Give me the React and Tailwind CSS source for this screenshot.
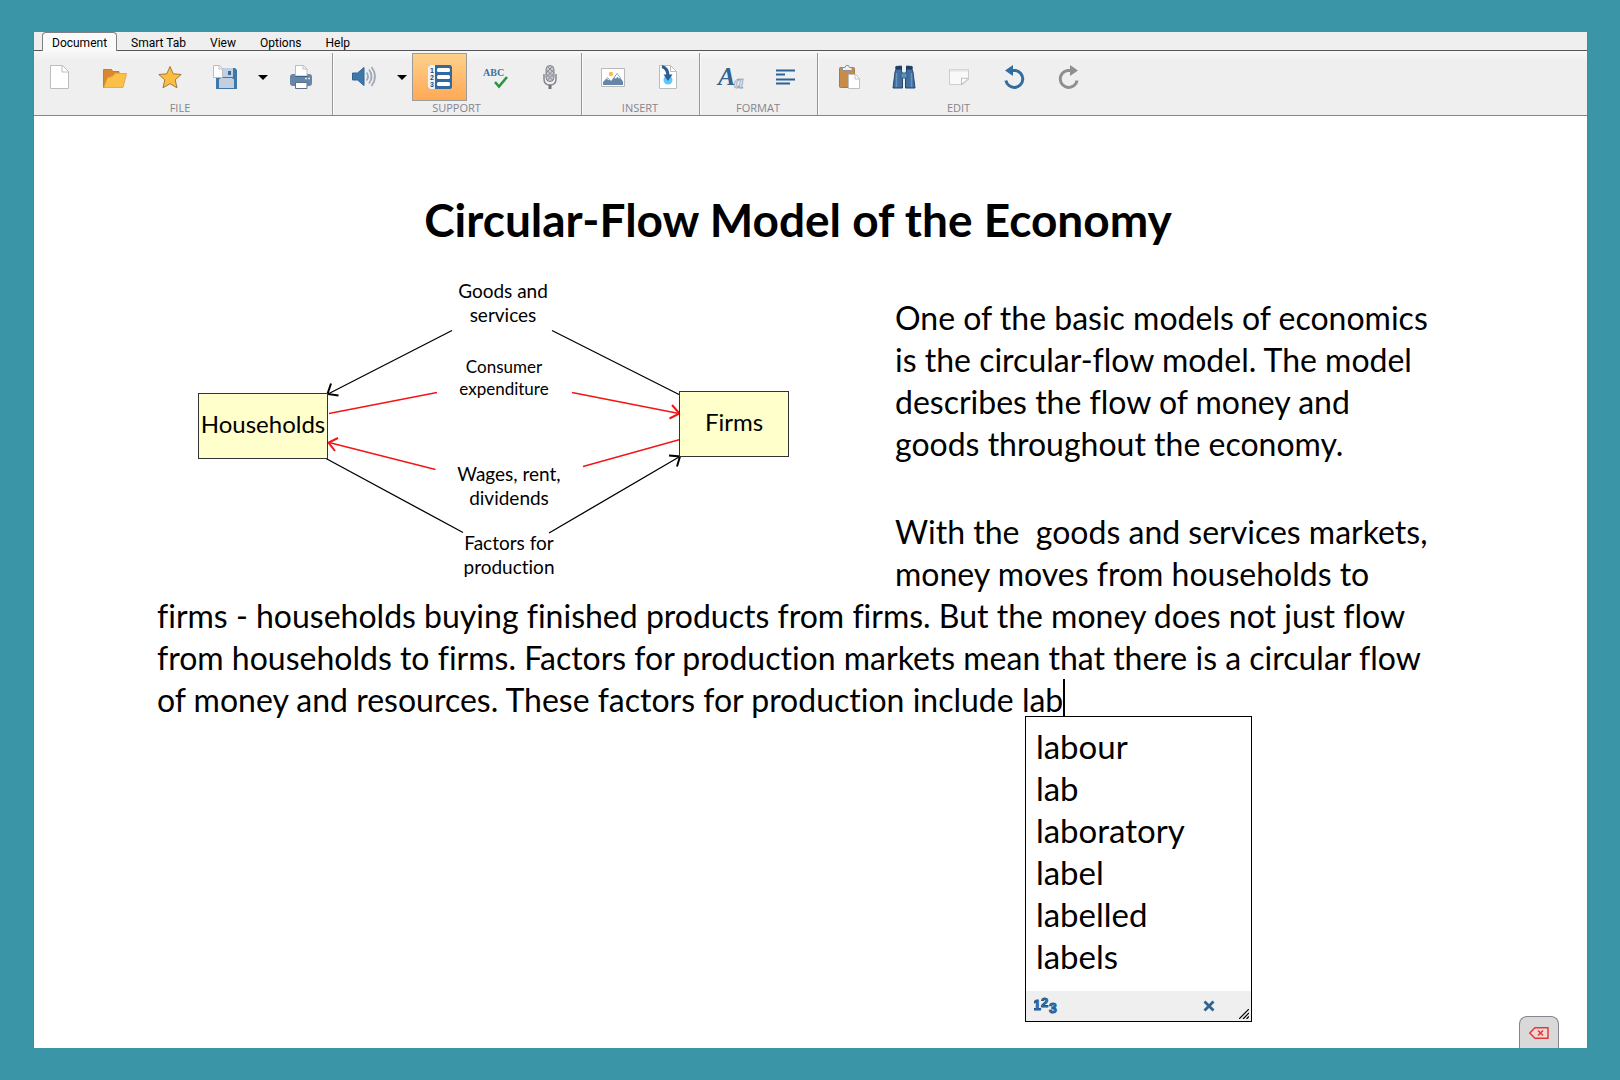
import { useState } from 'react'

const TABS = ['Document', 'Smart Tab', 'View', 'Options', 'Help']
const WORDS = ['labour', 'lab', 'laboratory', 'label', 'labelled', 'labels']

export default function App() {
  const [activeTab, setActiveTab] = useState('Document')

  return (
    <div className="flex min-h-screen bg-[#3a95a7] py-8 pr-8 pl-[33px] font-['Open_Sans',sans-serif] text-black">
      <div className="relative flex flex-1 flex-col border-x border-[#77777b] bg-white">
        <TabStrip active={activeTab} onChange={setActiveTab} />
        <Toolbar />
        <DocumentPage />
        <button
          aria-label="Backspace"
          className="absolute right-7 bottom-0 flex h-8 w-10 items-center justify-center rounded-t-lg border border-b-0 border-[#85858f] bg-[#d9d9d9]"
        >
          <BackspaceIcon />
        </button>
      </div>
    </div>
  )
}

function TabStrip({ active, onChange }) {
  return (
    <nav className="flex h-[19px] border-b border-[#55555a] bg-[#efefef] pl-2 font-[Roboto,sans-serif] text-xs leading-4">
      {TABS.map(tab => (
        <button
          key={tab}
          onClick={() => onChange(tab)}
          className={
            tab === active
              ? 'mr-0.5 h-[19px] rounded-t border border-b-0 border-[#808085] bg-[#fafafa] px-[9px] pt-px'
              : 'px-3 pt-[3px]'
          }
        >
          {tab}
        </button>
      ))}
    </nav>
  )
}

function Toolbar() {
  return (
    <div className="flex h-[65px] border-b border-[#85858f] bg-linear-to-b from-[#f8f8f8] from-0% to-[#efefef] to-15% pt-0.5">
      <ToolGroup label="FILE" className="-ml-0.5 pr-1">
        <Tool label="New"><NewIcon /></Tool>
        <Tool label="Open"><FolderIcon /></Tool>
        <Tool label="Favourites"><StarIcon /></Tool>
        <Tool label="Save"><SaveIcon /></Tool>
        <DropArrow label="Save options" />
        <Tool label="Print"><PrinterIcon /></Tool>
      </ToolGroup>
      <ToolGroup label="SUPPORT" className="pr-1 pl-0.5">
        <Tool label="Speech"><SpeakerIcon /></Tool>
        <DropArrow label="Speech options" />
        <Tool label="Prediction" selected><PredictionIcon /></Tool>
        <Tool label="Spell check"><SpellIcon /></Tool>
        <Tool label="Record"><MicIcon /></Tool>
      </ToolGroup>
      <ToolGroup label="INSERT" className="pr-1 pl-0.5">
        <Tool label="Insert picture"><PictureIcon /></Tool>
        <Tool label="Insert file"><InsertIcon /></Tool>
      </ToolGroup>
      <ToolGroup label="FORMAT" className="pr-1 pl-0.5">
        <Tool label="Font"><FontIcon /></Tool>
        <Tool label="Paragraph"><ParagraphIcon /></Tool>
      </ToolGroup>
      <ToolGroup label="EDIT" className="pr-1 pl-0.5" last>
        <Tool label="Paste"><PasteIcon /></Tool>
        <Tool label="Find"><BinocularsIcon /></Tool>
        <Tool label="Note"><NoteIcon /></Tool>
        <Tool label="Undo"><UndoIcon /></Tool>
        <Tool label="Redo"><RedoIcon /></Tool>
      </ToolGroup>
    </div>
  )
}

function ToolGroup({ label, className = '', last = false, children }) {
  return (
    <>
      <section className={`flex flex-col ${className}`}>
        <div className="flex h-12">{children}</div>
        <div className="text-center text-[11px] leading-[14px] text-[#85858c]">{label}</div>
      </section>
      {!last && <div className="w-0.5 border-r border-l border-l-[#99999d] border-r-[#fafafa]" />}
    </>
  )
}

function Tool({ label, selected = false, children }) {
  return (
    <button
      aria-label={label}
      aria-pressed={selected}
      className={`flex h-12 w-[55px] items-center justify-center ${
        selected ? 'border border-[#9c9c9c] bg-linear-to-b from-[#fed08a] to-[#ffa955]' : ''
      }`}
    >
      {children}
    </button>
  )
}

function DropArrow({ label }) {
  return (
    <button aria-label={label} className="flex h-12 w-[21px] items-center justify-center">
      <svg width="10" height="5" viewBox="0 0 10 5"><path d="M0 0h10L5 5z" /></svg>
    </button>
  )
}

function DocumentPage() {
  return (
    <main className="flex-1 pt-[74px] pr-[148px] pl-[123px] font-[Lato,sans-serif] [font-variant-ligatures:none]">
      <h1 className="text-center text-[46px] leading-[60px] font-bold">
        Circular-Flow Model of the Economy
      </h1>
      <div className="mt-7 flow-root text-[32px] leading-[42px] whitespace-pre">
        <FlowDiagram />
        <p className="mt-[19px]">
          One of the basic models of economics<br />
          is the circular-flow model. The model<br />
          describes the flow of money and<br />
          goods throughout the economy.
        </p>
        <p className="mt-[46px]">
          {'With the  goods and services markets,'}<br />
          money moves from households to<br />
          firms - households buying finished products from firms. But the money does not just flow<br />
          from households to firms. Factors for production markets mean that there is a circular flow<br />
          of money and resources. These factors for production include{' '}
          <span className="relative inline-block h-[42px] border-r-2 border-black align-top">
            lab
            <WordList />
          </span>
        </p>
      </div>
    </main>
  )
}

function WordList() {
  return (
    <div className="absolute top-[37px] left-[3px] w-[227px] border border-black bg-white">
      <ul className="pt-2 pb-[14px] text-[33px]">
        {WORDS.map(word => (
          <li key={word}>
            <button className="block w-full px-2.5 text-left">{word}</button>
          </li>
        ))}
      </ul>
      <div className="flex h-[30px] items-center justify-between bg-[#efefef] pr-0.5 pl-2">
        <button aria-label="Number words" className="pb-0.5"><NumbersIcon /></button>
        <div className="flex h-full items-center gap-6">
          <button aria-label="Close"><CloseIcon /></button>
          <div className="self-end pb-0.5"><ResizeGrip /></div>
        </div>
      </div>
    </div>
  )
}

// Drawing area is 738x300, coordinates below are relative to it
function FlowDiagram() {
  return (
    <figure className="relative float-left h-[300px] w-[738px] text-[19px] leading-6">
      <svg className="absolute inset-0" width="738" height="300" viewBox="0 0 738 300" fill="none" strokeWidth="1.3">
        <g stroke="#000">
          <path d="M295 52.500L171 116M395 52.500L523 117M169 180.500L306 254.500M392 255L522 179" />
          <path d="M174 105.500L170.500 116l11 1.500M512 177.500l11 1-3 10" strokeWidth="2" />
        </g>
        <g stroke="#f41414">
          <path d="M172 135.500L280 114.500M415 114.500L522 135.500M426 188.500L523 161.500M278.500 191.500L172 164.500" />
          <path d="M515 127l7.500 8.500-10 5M181 160l-9.500 4.500 6.500 8.500" strokeWidth="2" />
        </g>
      </svg>
      <div className="absolute top-[115px] left-[41px] flex h-[66px] w-[130px] items-center justify-center border border-[#333] bg-[#ffffcc] pb-1 text-2xl leading-7">
        Households
      </div>
      <div className="absolute top-[113px] left-[522px] flex h-[66px] w-[110px] items-center justify-center border border-[#333] bg-[#ffffcc] pb-1 text-2xl leading-7">
        Firms
      </div>
      <div className="absolute top-[1px] left-[276px] w-[140px] text-center">Goods and<br />services</div>
      <div className="absolute top-[78px] left-[277px] w-[140px] text-center text-[17px] leading-[22px]">Consumer<br />expenditure</div>
      <div className="absolute top-[184px] left-[282px] w-[140px] text-center">Wages, rent,<br />dividends</div>
      <div className="absolute top-[253px] left-[282px] w-[140px] text-center">Factors for<br />production</div>
    </figure>
  )
}

function Icon({ children }) {
  return <svg className="overflow-visible" width="24" height="24" viewBox="0 0 24 24" fill="none">{children}</svg>
}

function NewIcon() {
  return (
    <Icon>
      <path d="M2.500.5h12l6 6v17h-18z" fill="#fff" stroke="#bdbdbd" />
      <path d="M14 .5v6.500h6.500" stroke="#bdbdbd" />
    </Icon>
  )
}

function FolderIcon() {
  return (
    <Icon>
      <path d="M.5 4.500h8l1.500 2h6v16H.5z" fill="#d9882f" stroke="#c97c29" />
      <path d="M1 22.500L4.500 13l5-1.500L12 8.500h11.500L20 22.500z" fill="#fbc04a" stroke="#eda93a" />
    </Icon>
  )
}

function StarIcon() {
  return (
    <Icon>
      <path d="M12 1.500l3.200 7.300 8 .7-6 5.300 1.800 8L12 18.700l-7 4.100 1.800-8-6-5.300 8-.7z" fill="#fbbd42" stroke="#a07c39" strokeLinejoin="round" />
    </Icon>
  )
}

function SaveIcon() {
  return (
    <Icon>
      <path d="M3 3h19l2 2v19H3z" fill="#3f77a8" />
      <path d="M10 3h10v9H10z" fill="#c3cfe0" />
      <path d="M15 6h3v4h-3z" fill="#336b9e" />
      <path d="M6 14.500l2-1.500h11l2 1.500V23H6z" fill="#c3cfe0" />
      <path d="M.5.5h6l3 3v9h-9z" fill="#fff" stroke="#bdbdbd" />
      <path d="M6 .5v3.500h3.500" stroke="#bdbdbd" />
    </Icon>
  )
}

function PrinterIcon() {
  return (
    <Icon>
      <rect x="1" y="9" width="22" height="12" rx="3" fill="#6586a8" />
      <path d="M6.500 11V.5h8l3.500 3.500v7z" fill="#fff" stroke="#bdbdbd" />
      <path d="M14 .5V4h4" stroke="#bdbdbd" />
      <path d="M6 11.500h12.500" stroke="#3f5f82" />
      <path d="M16 13.500h2m1 0h2" stroke="#dde7f2" strokeWidth="1.500" />
      <path d="M6.500 17.500h11.500v6H6.500z" fill="#fff" stroke="#5c6f84" />
    </Icon>
  )
}

function SpeakerIcon() {
  return (
    <Icon>
      <path d="M.5 8h5L12 2.500v18L5.500 15h-5z" fill="#3f77a8" stroke="#2e6594" />
      <path d="M14.500 7.500q3 4 0 8M17 4.500q5 7 0 14M19.500 2q7 9.500 0 19" stroke="#a3abb9" strokeWidth="1.800" />
    </Icon>
  )
}

function PredictionIcon() {
  return (
    <Icon>
      <rect x="0" y="0" width="24" height="24" rx="2.500" fill="#326a9f" />
      <path d="M2.500 0H7v24H2.500A2.500 2.500 0 0 1 0 21.500v-19A2.500 2.500 0 0 1 2.500 0z" fill="#eef3f8" />
      <g fill="#fff">
        <rect x="9" y="3" width="13" height="4" rx="1.500" />
        <rect x="9" y="10" width="13" height="4" rx="1.500" />
        <rect x="9" y="17" width="13" height="4" rx="1.500" />
      </g>
      <g fill="#1d4d7b" fontSize="7" fontWeight="700" fontFamily="Liberation Sans">
        <text x="2" y="7.500">1</text>
        <text x="2" y="14.500">2</text>
        <text x="2" y="22">3</text>
      </g>
    </Icon>
  )
}

function SpellIcon() {
  return (
    <Icon>
      <text x="0" y="11" fill="#3e70a0" fontSize="10" fontWeight="700" fontFamily="Liberation Serif">ABC</text>
      <path d="M12 17l4 4.500L24 12" stroke="#2b9440" strokeWidth="2.600" />
    </Icon>
  )
}

function MicIcon() {
  return (
    <Icon>
      <rect x="8" y=".5" width="8" height="16" rx="4" fill="#c4c7cc" stroke="#7d8086" />
      <path d="M8.500 5l7 7M8.500 9l6 6M10 2l6 6M15.500 5l-7 7M15.500 9l-6 6M14 2L8 8" stroke="#85888e" strokeWidth=".9" />
      <path d="M6 9v5q0 6 6 6t6-6V9" stroke="#85888e" strokeWidth="1.500" />
      <path d="M12 20v4" stroke="#6f7277" strokeWidth="3" />
    </Icon>
  )
}

function PictureIcon() {
  return (
    <Icon>
      <path d="M.5 3.500h23v18H.5z" fill="#fff" stroke="#b9b9b9" />
      <circle cx="10" cy="9" r="2.200" fill="#fbbd42" />
      <path d="M2 20v-3l4.500-4.500L10 16l6-7.500 6 8V20z" fill="#6586a8" />
      <path d="M4 15.500l2.500-3 2 2-1 .8-1-1zM13 13l3-4.500 3.500 4.500-1.500 1-1.500-2L15 14z" fill="#fff" stroke="#6586a8" strokeWidth=".6" />
    </Icon>
  )
}

function InsertIcon() {
  return (
    <Icon>
      <path d="M3.500.5h11l6 6v17h-17z" fill="#fff" stroke="#bdbdbd" />
      <path d="M14.500.5v6h6" stroke="#bdbdbd" />
      <circle cx="12" cy="15" r="4.500" fill="#5cc9ff" />
      <path d="M6 1.500q6 1.500 6 10" stroke="#2c5f8f" strokeWidth="3.200" />
      <path d="M7.500 9.500h9L12 16z" fill="#2c5f8f" />
    </Icon>
  )
}

function FontIcon() {
  return (
    <Icon>
      <text x="-1" y="20" fill="#2f6391" fontSize="26" fontWeight="700" fontStyle="italic" fontFamily="Liberation Serif">A</text>
      <text x="15" y="23" fill="#dfe3ea" stroke="#98a4b5" strokeWidth=".8" fontSize="19" fontWeight="700" fontStyle="italic" fontFamily="Liberation Serif">a</text>
    </Icon>
  )
}

function ParagraphIcon() {
  return (
    <Icon>
      <path d="M2 5.500h19M2 9.500h9M2 14.500h19M2 18.500h14" stroke="#2b6398" strokeWidth="2" />
    </Icon>
  )
}

function PasteIcon() {
  return (
    <Icon>
      <rect x="2.500" y="2.500" width="15" height="20" rx="1" fill="#c88c49" stroke="#ad783c" />
      <path d="M5.500 5.500v-3h2.500L9 .5h2.500l1 2h2.500v3z" fill="#eef0f3" stroke="#8b929b" />
      <path d="M11.500 9.500h7l4 4v10h-11z" fill="#fff" stroke="#c0c0c0" />
      <path d="M18 9.500v4.500h4.500" stroke="#c0c0c0" />
    </Icon>
  )
}

function BinocularsIcon() {
  return (
    <Icon>
      <path d="M1 23L3 7l1-2.500V1.500L9.500 1v5l1 3V23zM23 23L21 7l-1-2.500V1.500L14.500 1v5l-1 3V23z" fill="#426f9f" stroke="#24476d" />
      <path d="M3.500 3h6.500M14 3h6.500" stroke="#1d3c5f" strokeWidth="3" />
      <path d="M4.500 8v14M19.500 8v14" stroke="#6693c1" strokeWidth="1.500" />
      <rect x="9" y="8" width="6" height="5" fill="#5c93bd" stroke="#346086" />
    </Icon>
  )
}

function NoteIcon() {
  return (
    <Icon>
      <path d="M2.500 4.500h19v10l-6 5h-13z" fill="#f9f9f9" stroke="#cdcdcd" />
      <path d="M3 5.500h18" stroke="#e3e3e3" strokeWidth="2" />
      <path d="M14.500 19.500v-6.500q3 1 7 0z" fill="#fff" stroke="#bebebe" />
    </Icon>
  )
}

function UndoIcon() {
  return (
    <Icon>
      <path d="M10 5.500h3.500a8.500 8.500 0 1 1-9.600 10" stroke="#336c9f" strokeWidth="3" />
      <path d="M3 5.500L11 0v11z" fill="#336c9f" />
    </Icon>
  )
}

function RedoIcon() {
  return (
    <Icon>
      <path d="M14 5.500h-3.500a8.500 8.500 0 1 0 9.600 10" stroke="#8f8f8f" strokeWidth="3" />
      <path d="M21 5.500L13 0v11z" fill="#8f8f8f" />
    </Icon>
  )
}

function NumbersIcon() {
  return (
    <svg className="block" width="24" height="20" viewBox="0 0 24 20" fill="#3f87c5" stroke="#1f568c" strokeWidth="1" fontFamily="Liberation Sans" fontWeight="700">
      <text x="-1" y="15" fontSize="14">1</text>
      <text x="7" y="12" fontSize="13">2</text>
      <text x="15" y="18" fontSize="14">3</text>
    </svg>
  )
}

function CloseIcon() {
  return (
    <svg className="block" width="12" height="12" viewBox="0 0 12 12">
      <path d="M1.500 1.500l9 9M10.500 1.500l-9 9" stroke="#2f6391" strokeWidth="2.800" />
    </svg>
  )
}

function ResizeGrip() {
  return (
    <svg className="block" width="10" height="10" viewBox="0 0 10 10" stroke="#000" strokeWidth="1.200">
      <path d="M0 10L10 0M4 10l6-6M7.500 10L10 7.500" />
    </svg>
  )
}

function BackspaceIcon() {
  return (
    <svg width="20" height="12" viewBox="0 0 20 12" fill="none" stroke="#dc3c3c">
      <path d="M.8 6L6 .8h13v10.400H6z" fill="#f3d6d6" strokeWidth="1.500" />
      <path d="M9 3.500l5 5M14 3.500l-5 5" strokeWidth="1.600" />
    </svg>
  )
}
